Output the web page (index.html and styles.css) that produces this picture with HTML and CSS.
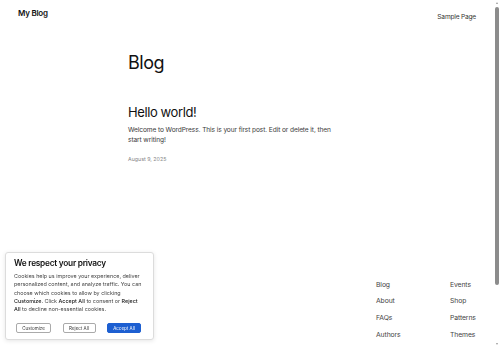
FILE: index.html
```html
<!DOCTYPE html>
<html lang="en">
<head>
    <meta charset="UTF-8">
    <meta name="viewport" content="width=device-width, initial-scale=1.0">
    <title>My Blog</title>
    <link rel="stylesheet" href="styles.css">
</head>
<body>

<header class="site-header">
    <a class="site-title" href="#">My Blog</a>
    <nav class="site-nav">
        <a href="#">Sample Page</a>
    </nav>
</header>

<main class="content">
    <h1 class="page-title">Blog</h1>

    <article class="post">
        <h2 class="post-title">Hello world!</h2>
        <p class="post-excerpt">Welcome to WordPress. This is your first post. Edit or delete it, then start writing!</p>
        <div class="post-date">August 9, 2025</div>
    </article>
</main>

<footer class="site-footer">
    <div class="footer-nav">
        <ul class="footer-col">
            <li><a href="#">Blog</a></li>
            <li><a href="#">About</a></li>
            <li><a href="#">FAQs</a></li>
            <li><a href="#">Authors</a></li>
        </ul>
        <ul class="footer-col">
            <li><a href="#">Events</a></li>
            <li><a href="#">Shop</a></li>
            <li><a href="#">Patterns</a></li>
            <li><a href="#">Themes</a></li>
        </ul>
    </div>
</footer>

<div class="cookie-banner">
    <h4>We respect your privacy</h4>
    <p>Cookies help us improve your experience, deliver personalized content, and analyze traffic. You can choose which cookies to allow by clicking <b>Customize</b>. Click <b>Accept All</b> to consent or <b>Reject All</b> to decline non-essential cookies.</p>
    <div class="cookie-buttons">
        <button class="cookie-btn customize">Customize</button>
        <button class="cookie-btn">Reject All</button>
        <button class="cookie-btn accept">Accept All</button>
    </div>
</div>

<!-- the page scrolls; this stands in for the scroll bar gutter -->
<div class="scroll-gutter">
    <span class="arrow up"></span>
    <div class="thumb"></div>
    <span class="arrow down"></span>
</div>

</body>
</html>
```

FILE: styles.css
```css
body {
    font-family: Inter, "Noto Sans", sans-serif;
    background-color: #fff;
    color: #111;
    margin: 0 15px 0 0;
}

a {
    color: inherit;
    text-decoration: none;
}

.site-header {
    display: flex;
    justify-content: space-between;
    align-items: center;
    box-sizing: border-box;
    height: 26px;
    padding: 0 9px 0 18px;
}

.site-title {
    font-size: 8px;
    font-weight: 600;
    letter-spacing: -0.25px;
    color: #111;
}

.site-nav a {
    font-size: 6.6px;
    color: #333;
    letter-spacing: -0.2px;
}

.content {
    box-sizing: border-box;
    width: 229px;
    height: 250.5px;
    margin: 0 auto;
    padding-top: 27.5px;
}

.page-title {
    font-size: 18px;
    line-height: 18px;
    font-weight: 400;
    letter-spacing: -0.5px;
    margin: 0 0 34.5px;
    color: #111;
}

.post-title {
    font-size: 13px;
    line-height: 13px;
    font-weight: 400;
    letter-spacing: -0.4px;
    margin: 0 0 6px;
    color: #111;
}

.post-excerpt {
    font-size: 6.6px;
    line-height: 10px;
    letter-spacing: -0.1px;
    color: #3a3a3a;
    margin: 0 0 11px;
    width: 215px;
}

.post-date {
    font-size: 5.3px;
    line-height: 6px;
    color: #888;
}

.site-footer {
    display: flex;
    justify-content: flex-end;
    padding: 0 9px 60px 0;
}

.footer-nav {
    display: grid;
    grid-template-columns: 74px 26px;
}

.footer-col {
    list-style: none;
    margin: 0;
    padding: 0;
}

.footer-col li {
    font-size: 6.8px;
    line-height: 16.7px;
    color: #444;
    letter-spacing: -0.1px;
    white-space: nowrap;
}

/* Cookie notice */
.cookie-banner {
    position: fixed;
    left: 5px;
    bottom: 8px;
    width: 131px;
    padding: 6px 8px;
    background-color: #fff;
    border: 1px solid #dcdcdc;
    border-radius: 3px;
    box-shadow: 0 1px 4px rgba(0, 0, 0, 0.1);
}

.cookie-banner h4 {
    font-size: 8.3px;
    line-height: 9px;
    font-weight: 600;
    letter-spacing: -0.25px;
    margin: 0 0 4px;
    color: #111;
}

.cookie-banner p {
    font-size: 5.4px;
    line-height: 8.3px;
    letter-spacing: 0;
    color: #444;
    margin: 0 0 9.5px;
}

.cookie-banner b {
    font-weight: 500;
    color: #222;
}

.cookie-buttons {
    display: flex;
    gap: 11.5px;
    padding-left: 2px;
}

.cookie-btn {
    font-family: inherit;
    font-size: 4.5px;
    background-color: #fff;
    color: #333;
    border: 1px solid #aaa;
    border-radius: 2px;
    width: 33px;
    height: 10px;
    padding: 0;
    cursor: pointer;
}

.cookie-btn.customize {
    width: 35px;
}

.cookie-btn.accept {
    width: 34px;
    background-color: #1d5fd1;
    border-color: #1d5fd1;
    color: #fff;
}

.scroll-gutter {
    position: fixed;
    top: 0;
    right: 0;
    bottom: 0;
    width: 15px;
    background-color: #fff;
}

.scroll-gutter .thumb {
    position: absolute;
    top: 7px;
    right: 1px;
    width: 4px;
    height: 278px;
    border-radius: 2px;
    background-color: #8c8c8c;
}

.scroll-gutter .arrow {
    position: absolute;
    right: 2px;
    width: 0;
    height: 0;
    border-left: 1.5px solid transparent;
    border-right: 1.5px solid transparent;
}

.scroll-gutter .arrow.up {
    top: 2px;
    border-bottom: 2px solid #999;
}

.scroll-gutter .arrow.down {
    bottom: 3px;
    border-top: 2px solid #999;
}
```
